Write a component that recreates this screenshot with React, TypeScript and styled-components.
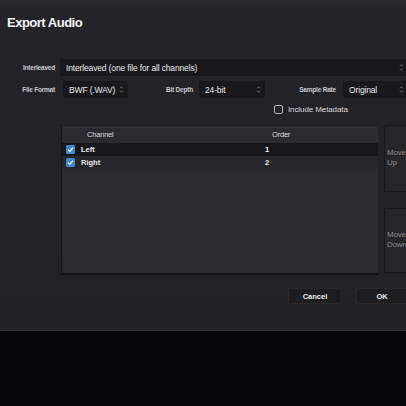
import styled, { createGlobalStyle } from 'styled-components';

const GlobalStyle = createGlobalStyle`
  html, body {
    margin: 0;
    padding: 0;
    background: #060608;
  }
  body {
    font-family: "Liberation Sans", Arial, sans-serif;
    overflow: hidden;
  }
`;

const Page = styled.div`
  width: 406px;
  height: 406px;
  background: #060608;
  overflow: hidden;
`;

const Dialog = styled.div`
  width: 406px;
  height: 330px;
  background: linear-gradient(#2a2a2e 0px, #242428 12px, #232327 100%);
  border-bottom: 1px solid #323236;
  display: flex;
  flex-direction: column;
  overflow: hidden;
  color: #e6e6e8;
`;

const Title = styled.h1`
  margin: 0;
  padding: 15px 0 0 7px;
  height: 44px;
  box-sizing: border-box;
  font-size: 13px;
  font-weight: 700;
  letter-spacing: -0.5px;
  color: #f4f4f6;
`;

const Row = styled.div<{ $top: number }>`
  display: flex;
  align-items: center;
  margin-top: ${({ $top }) => $top}px;
  height: 17px;
`;

const Label = styled.span<{ $width: number }>`
  width: ${({ $width }) => $width}px;
  flex: none;
  text-align: right;
  font-size: 6.5px;
  font-weight: 700;
  letter-spacing: -0.2px;
  color: #c9c9cd;
`;

const Select = styled.div<{ $width?: number; $gap: number }>`
  position: relative;
  margin-left: ${({ $gap }) => $gap}px;
  ${({ $width }) => ($width ? `width: ${$width}px; flex: none;` : 'flex: 1; margin-right: -12px;')}
  height: 17px;
  box-sizing: border-box;
  padding: 0 0 0 6px;
  background: #19191c;
  border-radius: 2px;
  display: flex;
  align-items: center;
  font-size: 8.5px;
  letter-spacing: -0.15px;
  color: #e8e8ea;
`;

const Arrows = styled.svg<{ $right: number }>`
  position: absolute;
  right: ${({ $right }) => $right}px;
  top: 4px;
  width: 5px;
  height: 9px;
`;

const MetaRow = styled.label`
  display: flex;
  align-items: center;
  gap: 5px;
  margin: 4px 0 0 274px;
  height: 14px;
  font-size: 8px;
  letter-spacing: -0.1px;
  color: #d6d6da;
`;

const EmptyBox = styled.span`
  width: 9px;
  height: 9px;
  border: 1px solid #b8b8bc;
  border-radius: 2px;
  box-sizing: border-box;
`;

const Body = styled.div`
  display: flex;
  margin-top: 9px;
  height: 150px;
`;

const Table = styled.div`
  flex: none;
  margin-left: 61px;
  width: 316px;
  height: 148px;
  border-left: 1px solid #151517;
  border-bottom: 2px solid #141416;
  background: #2a2a2e;
  display: flex;
  flex-direction: column;
`;

const HeaderRow = styled.div`
  display: flex;
  align-items: center;
  height: 17px;
  border-top: 1px solid #1d1d20;
  background: #2b2b2f;
  font-size: 7.5px;
  color: #d8d8dc;
  letter-spacing: -0.2px;
`;

const Cell = styled.span<{ $width: number; $pad: number }>`
  width: ${({ $width }) => $width}px;
  padding-left: ${({ $pad }) => $pad}px;
  box-sizing: border-box;
  flex: none;
`;

const ChannelRow = styled.div<{ $dark: boolean }>`
  display: flex;
  align-items: center;
  height: 13px;
  background: ${({ $dark }) => ($dark ? '#17171a' : '#27272b')};
  font-size: 7.5px;
  font-weight: 700;
  color: #ececee;
`;

const Check = styled.svg`
  width: 9px;
  height: 9px;
  margin: 0 6px 0 4px;
  flex: none;
`;

const SideButtons = styled.div`
  flex: none;
  margin-left: 6px;
  display: flex;
  flex-direction: column;
  gap: 16px;
  height: 148px;
`;

const MoveButton = styled.button<{ $height: number }>`
  width: 40px;
  height: ${({ $height }) => $height}px;
  background: #262629;
  border: 1px solid #19191b;
  border-radius: 2px;
  padding: 0 0 0 2px;
  text-align: left;
  font-family: inherit;
  font-size: 8px;
  line-height: 10px;
  color: #8c8c90;
  letter-spacing: -0.2px;
`;

const MoveText = styled.span`
  display: block;
  width: 24px;
`;

const Footer = styled.div`
  display: flex;
  gap: 14px;
  margin: 13px 0 0 288px;
`;

const FooterButton = styled.button<{ $width: number }>`
  width: ${({ $width }) => $width}px;
  flex: none;
  height: 16px;
  background: #1e1e21;
  border: 1px solid #29292c;
  border-radius: 2px;
  font-family: inherit;
  font-size: 7.5px;
  font-weight: 700;
  color: #ececee;
  padding: 0;
`;

const UpDown = ({ right }: { right: number }) => (
  <Arrows $right={right} viewBox="0 0 5 9">
    <path d="M1 3.2 L2.5 1.6 L4 3.2" fill="none" stroke="#7a7a80" strokeWidth="0.8" />
    <path d="M1 5.8 L2.5 7.4 L4 5.8" fill="none" stroke="#7a7a80" strokeWidth="0.8" />
  </Arrows>
);

const BlueCheck = () => (
  <Check viewBox="0 0 9 9">
    <rect x="0" y="0" width="9" height="9" rx="1.6" fill="#3d86d8" />
    <path d="M2 4.6 L3.8 6.4 L7 2.6" fill="none" stroke="#ffffff" strokeWidth="1.3" />
  </Check>
);

const channels = [
  { name: 'Left', order: 1 },
  { name: 'Right', order: 2 },
];

export default function App() {
  return (
    <Page>
      <GlobalStyle />
      <Dialog>
        <Title>Export Audio</Title>
        <Row $top={15}>
          <Label $width={55}>Interleaved</Label>
          <Select $gap={5}>
            Interleaved (one file for all channels)
            <UpDown right={14} />
          </Select>
        </Row>
        <Row $top={5}>
          <Label $width={55}>File Format</Label>
          <Select $gap={8} $width={65}>
            BWF (.WAV)
            <UpDown right={4} />
          </Select>
          <Label $width={65}>Bit Depth</Label>
          <Select $gap={6} $width={66}>
            24-bit
            <UpDown right={4} />
          </Select>
          <Label $width={71}>Sample Rate</Label>
          <Select $gap={7}>
            Original
            <UpDown right={14} />
          </Select>
        </Row>
        <MetaRow>
          <EmptyBox />
          Include Metadata
        </MetaRow>
        <Body>
          <Table>
            <HeaderRow>
              <Cell $width={208} $pad={25}>Channel</Cell>
              <Cell $width={100} $pad={2}>Order</Cell>
            </HeaderRow>
            {channels.map((c, i) => (
              <ChannelRow key={c.name} $dark={i === 0}>
                <BlueCheck />
                <Cell $width={184} $pad={0}>{c.name}</Cell>
                <Cell $width={100} $pad={0}>{c.order}</Cell>
              </ChannelRow>
            ))}
          </Table>
          <SideButtons>
            <MoveButton $height={67}><MoveText>Move Up</MoveText></MoveButton>
            <MoveButton $height={66}><MoveText>Move Down</MoveText></MoveButton>
          </SideButtons>
        </Body>
        <Footer>
          <FooterButton $width={54}>Cancel</FooterButton>
          <FooterButton $width={52}>OK</FooterButton>
        </Footer>
      </Dialog>
    </Page>
  );
}
